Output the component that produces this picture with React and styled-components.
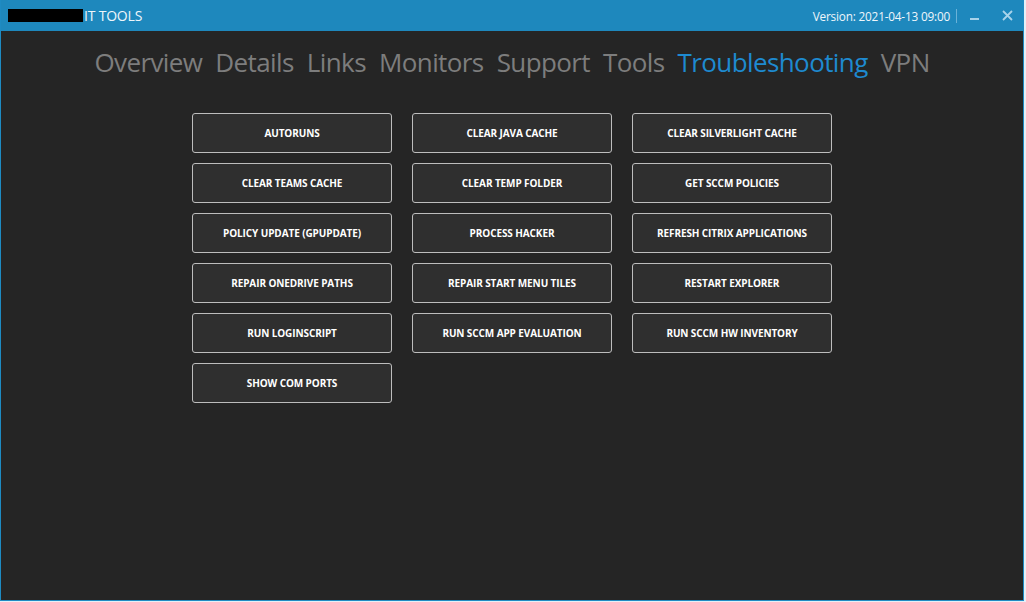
import React from 'react';
import styled, { createGlobalStyle } from 'styled-components';

const Global = createGlobalStyle`
  html, body {
    margin: 0;
    padding: 0;
    background: #e6eff6;
  }
  body {
    font-family: "Open Sans", "Noto Sans", sans-serif;
  }
`;

const Window = styled.div`
  width: 1024px;
  height: 601px;
  box-sizing: border-box;
  border: 1px solid #1e8bc3;
  border-top: none;
  background: #252525;
  display: flex;
  flex-direction: column;
`;

const TitleBar = styled.div`
  height: 31px;
  flex: none;
  background: #1e88bd;
  display: flex;
  align-items: center;
  padding: 0 0 0 7px;
  color: #eef6fb;
`;

const Redacted = styled.span`
  width: 75px;
  height: 13px;
  background: #000;
  margin-right: 1px;
`;

const AppName = styled.span`
  font-size: 14px;
  letter-spacing: -0.2px;
  flex: 1;
`;

const Version = styled.span`
  font-size: 11.8px;
  letter-spacing: -0.2px;
`;

const Divider = styled.span`
  width: 1px;
  height: 14px;
  background: #6ab2d8;
  margin: 0 2px 0 6px;
`;

const WinButton = styled.button`
  width: 32px;
  height: 31px;
  border: none;
  background: transparent;
  padding: 0;
  display: flex;
  align-items: center;
  justify-content: center;
  cursor: pointer;
`;

const Nav = styled.nav`
  display: flex;
  justify-content: center;
  gap: 13px;
  margin-top: 13px;
`;

const Tab = styled.span`
  font-size: 26px;
  line-height: 36px;
  letter-spacing: -0.6px;
  color: ${p => (p.$active ? '#1e8ad0' : '#7d7d7d')};
`;

const Grid = styled.div`
  display: grid;
  grid-template-columns: repeat(3, 200px);
  column-gap: 20px;
  row-gap: 10px;
  justify-content: center;
  margin-top: 33px;
`;

const ToolButton = styled.button`
  height: 40px;
  box-sizing: border-box;
  border: 1px solid #bdbdbd;
  border-radius: 3px;
  background: #2f2f2f;
  color: #ffffff;
  font-family: "Open Sans", "Noto Sans", sans-serif;
  font-weight: 700;
  font-size: 10px;
  letter-spacing: -0.1px;
  text-transform: uppercase;
  padding: 0;
  cursor: pointer;
`;

const tabs = ['Overview', 'Details', 'Links', 'Monitors', 'Support', 'Tools', 'Troubleshooting', 'VPN'];

const tools = [
  'Autoruns', 'Clear Java Cache', 'Clear Silverlight Cache',
  'Clear Teams Cache', 'Clear Temp Folder', 'Get SCCM Policies',
  'Policy Update (GPUpdate)', 'Process Hacker', 'Refresh Citrix Applications',
  'Repair OneDrive Paths', 'Repair Start Menu Tiles', 'Restart Explorer',
  'Run Loginscript', 'Run SCCM App Evaluation', 'Run SCCM HW Inventory',
  'Show COM Ports',
];

export default function App() {
  return (
    <>
      <Global />
      <Window>
        <TitleBar>
          <Redacted />
          <AppName>IT TOOLS</AppName>
          <Version>Version: 2021-04-13 09:00</Version>
          <Divider />
          <WinButton aria-label="Minimize">
            <svg width="10" height="10" viewBox="0 0 10 10">
              <rect x="0" y="7" width="9" height="2" fill="#a9d3ea" />
            </svg>
          </WinButton>
          <WinButton aria-label="Close">
            <svg width="11" height="11" viewBox="0 0 11 11">
              <path d="M1 1 L10 10 M10 1 L1 10" stroke="#a9d3ea" strokeWidth="1.8" />
            </svg>
          </WinButton>
        </TitleBar>
        <Nav>
          {tabs.map(t => (
            <Tab key={t} $active={t === 'Troubleshooting'}>{t}</Tab>
          ))}
        </Nav>
        <Grid>
          {tools.map(t => (
            <ToolButton key={t}>{t}</ToolButton>
          ))}
        </Grid>
      </Window>
    </>
  );
}
